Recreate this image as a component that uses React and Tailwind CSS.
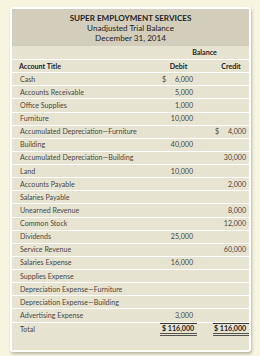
import React from "react";

const rows = [
  ["Cash", "6,000", "", true, false],
  ["Accounts Receivable", "5,000", ""],
  ["Office Supplies", "1,000", ""],
  ["Furniture", "10,000", ""],
  ["Accumulated Depreciation\u2014Furniture", "", "4,000", false, true],
  ["Building", "40,000", ""],
  ["Accumulated Depreciation\u2014Building", "", "30,000"],
  ["Land", "10,000", ""],
  ["Accounts Payable", "", "2,000"],
  ["Salaries Payable", "", ""],
  ["Unearned Revenue", "", "8,000"],
  ["Common Stock", "", "12,000"],
  ["Dividends", "25,000", ""],
  ["Service Revenue", "", "60,000"],
  ["Salaries Expense", "16,000", ""],
  ["Supplies Expense", "", ""],
  ["Depreciation Expense\u2014Furniture", "", ""],
  ["Depreciation Expense\u2014Building", "", ""],
  ["Advertising Expense", "3,000", ""],
];

function Row({ title, debit, credit, dd, cd }) {
  return (
    <div className="flex h-[12.13px] mb-[1px] bg-[#e6e3d1] items-center text-[#4a4843] text-[7.1px] leading-none">
      <div className="w-[148px] pl-[8px] whitespace-nowrap">{title}</div>
      <div className="w-[37px] flex justify-between pl-[2px] pr-[4px]">
        <span>{dd ? "$" : ""}</span>
        <span>{debit}</span>
      </div>
      <div className="w-[52px] pl-[16px]">
        <div className="flex justify-between pl-[2px] pr-[3px]">
          <span>{cd ? "$" : ""}</span>
          <span>{credit}</span>
        </div>
      </div>
    </div>
  );
}

export default function App() {
  return (
    <div
      className="w-[260px] h-[356px] bg-[#f7f4df] pt-[7px] pl-[10px] overflow-hidden"
      style={{ fontFamily: "Lato, 'Open Sans', sans-serif" }}
    >
      <div className="w-[241px] border-2 border-white bg-white rounded-[3px] shadow-[1px_2px_3px_rgba(0,0,0,0.25)]">
        <div className="h-[37px] bg-[#d3cebc] flex flex-col items-center justify-center text-[#24221f] leading-[10px] text-[8.1px]">
          <div className="font-bold">SUPER EMPLOYMENT SERVICES</div>
          <div>Unadjusted Trial Balance</div>
          <div>December 31, 2014</div>
        </div>
        <div className="flex h-[13px] mb-[1px] bg-[#e6e3d1] items-center text-[#24221f] text-[7.1px] font-bold leading-none">
          <div className="w-[148px]"></div>
          <div className="w-[89px] text-center">Balance</div>
        </div>
        <div className="flex h-[12.13px] mb-[1px] bg-[#e6e3d1] items-center text-[#24221f] text-[7.1px] font-bold leading-none">
          <div className="w-[148px] pl-[7px]">Account Title</div>
          <div className="w-[37px] text-center">Debit</div>
          <div className="w-[52px] pl-[16px] text-center">Credit</div>
        </div>
        {rows.map((r, i) => (
          <Row key={i} title={r[0]} debit={r[1]} credit={r[2]} dd={r[3]} cd={r[4]} />
        ))}
        <div className="flex h-[13.13px] bg-[#e6e3d1] text-[#24221f] text-[7.1px] leading-none">
          <div className="w-[148px] pl-[8px] flex items-center text-[#4a4843]">Total</div>
          <div className="w-[37px] flex pl-[2px] items-center font-bold border-t border-b-[3px] border-t-[#3b3a36] border-b-[#55534d] border-double">
            <span>$ 116,000</span>
          </div>
          <div className="w-[52px] pl-[16px]">
            <div className="h-full flex items-center pl-[1px] font-bold border-t border-b-[3px] border-t-[#3b3a36] border-b-[#55534d] border-double">
              <span>$ 116,000</span>
            </div>
          </div>
        </div>
        <div className="h-[14px] bg-[#e6e3d1]"></div>
      </div>
    </div>
  );
}
